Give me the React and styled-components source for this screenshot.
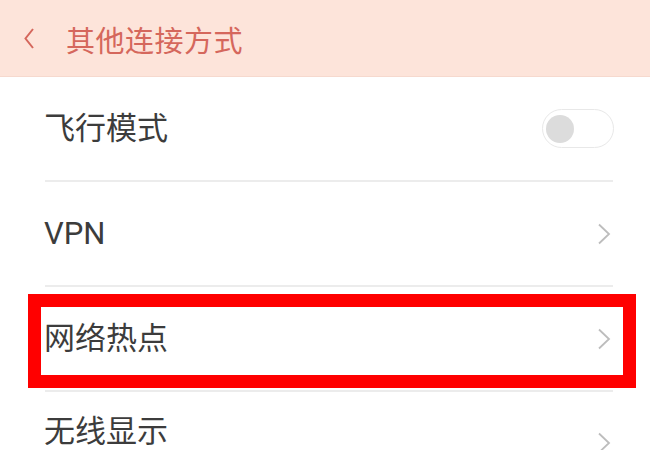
import React from "react";
import styled, { createGlobalStyle } from "styled-components";

const Global = createGlobalStyle`
  html, body { margin: 0; padding: 0; background: #ffffff; }
  body { width: 650px; height: 450px; overflow: hidden; font-family: "Roboto", "Noto Sans CJK SC", sans-serif; }
`;

const Page = styled.div`
  position: relative;
  width: 650px;
  height: 450px;
  overflow: hidden;
  background: #ffffff;
`;

const Header = styled.header`
  height: 76px;
  display: flex;
  align-items: center;
  padding-left: 24px;
  gap: 32px;
  background: #fde4da;
  border-bottom: 1px solid #f6d9ce;
`;

const Title = styled.h1`
  margin: 0;
  font-family: "Noto Sans CJK SC", sans-serif;
  font-weight: 400;
  font-size: 29px;
  color: #d5675c;
  letter-spacing: 0.5px;
  line-height: 1;
  padding-top: 2px;
`;

const List = styled.div`
  display: flex;
  flex-direction: column;
  padding: 0 37px 0 45px;
`;

const Row = styled.div`
  height: 103px;
  display: flex;
  align-items: center;
  justify-content: space-between;
  border-bottom: ${(p) => (p.$last ? "none" : "2px solid #ececec")};
`;

const Label = styled.span`
  font-family: "Roboto", "Noto Sans CJK SC", sans-serif;
  font-size: 31px;
  color: #3c3c3c;
  line-height: 1;
  margin-top: ${(p) => p.$shift || 0}px;
  margin-left: -1px;
`;

const Track = styled.div`
  width: 67px;
  height: 37px;
  border: 1.5px solid #e8e8e8;
  border-radius: 20px;
  background: #fff;
  display: flex;
  align-items: center;
  padding-left: 3px;
  box-sizing: content-box;
  margin-right: -1px;
`;

const Knob = styled.div`
  width: 28px;
  height: 28px;
  border-radius: 50%;
  background: #dcdcdc;
`;

const Chevron = styled.svg`
  width: 14px;
  height: 22px;
  margin-right: 2px;
  margin-top: ${(p) => p.$shift || 0}px;
`;

const Highlight = styled.div`
  position: absolute;
  left: 28px;
  top: 294px;
  width: 608px;
  height: 94px;
  border: 13px solid #ff0000;
  box-sizing: border-box;
  pointer-events: none;
`;

const Arrow = ({ shift }) => (
  <Chevron $shift={shift} viewBox="0 0 14 22">
    <path d="M2 1.5 L12 11 L2 20.5" fill="none" stroke="#bdbdbd" strokeWidth="1.8" />
  </Chevron>
);

export default function App() {
  return (
    <Page>
      <Global />
      <Header>
        <svg width="10" height="21" viewBox="0 0 10 21">
          <path d="M9 1 L1.5 10.5 L9 20" fill="none" stroke="#d5675c" strokeWidth="2" />
        </svg>
        <Title>其他连接方式</Title>
      </Header>
      <List>
        <Row>
          <Label>飞行模式</Label>
          <Track>
            <Knob />
          </Track>
        </Row>
        <Row>
          <Label>VPN</Label>
          <Arrow />
        </Row>
        <Row>
          <Label>网络热点</Label>
          <Arrow />
        </Row>
        <Row $last>
          <Label $shift={-24}>无线显示</Label>
          <Arrow shift={-2} />
        </Row>
      </List>
      <Highlight />
    </Page>
  );
}
